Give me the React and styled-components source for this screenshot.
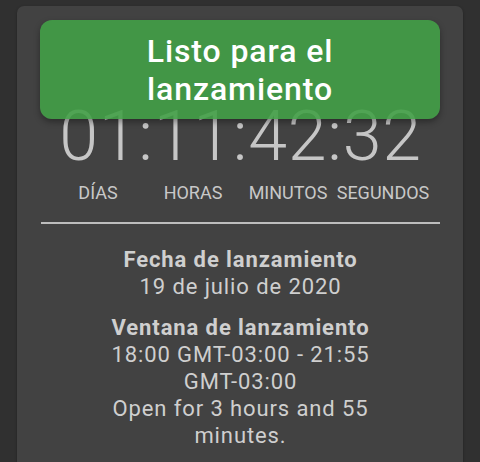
import React from "react";
import styled, { createGlobalStyle } from "styled-components";

const Global = createGlobalStyle`
  html, body { margin: 0; padding: 0; background: #303030; }
  body { font-family: Roboto, "Noto Sans", sans-serif; width: 480px; height: 462px; overflow: hidden; }
`;

const Page = styled.div`
  padding: 6px 17px 0 17px;
`;

const Card = styled.div`
  position: relative;
  background: #424242;
  border-radius: 7px;
  height: 470px;
  padding: 95px 23px 0 24px;
  box-sizing: border-box;
  box-shadow: 0 1px 3px rgba(0,0,0,0.3);
`;

const Toast = styled.div`
  position: absolute;
  top: 14px;
  left: 23px;
  right: 23px;
  height: 99px;
  border-radius: 12px;
  background: rgba(67, 160, 71, 0.9);
  box-shadow: 0 3px 6px rgba(0,0,0,0.35);
  color: #fff;
  font-size: 32px;
  font-weight: 500;
  letter-spacing: 0.9px;
  line-height: 38px;
  text-align: center;
  display: flex;
  align-items: center;
  justify-content: center;
  z-index: 2;
`;

const Clock = styled.div`
  font-size: 70px;
  font-weight: 300;
  line-height: 70px;
  color: #c6c6c6;
  text-align: center;
  letter-spacing: 0.7px;
`;

const Units = styled.div`
  display: grid;
  grid-template-columns: repeat(4, 95px);
  justify-content: center;
  margin-top: 12px;
`;

const Unit = styled.div`
  text-align: center;
  font-size: 18px;
  line-height: 20px;
  color: #c8c8c8;
`;

const Divider = styled.hr`
  border: none;
  height: 2px;
  background: #bdbdbd;
  margin: 19px 0 0 0;
`;

const Info = styled.div`
  width: 290px;
  margin: 22px auto 0;
  text-align: center;
  color: #cfcfcf;
  font-size: 22px;
  letter-spacing: 0.9px;
  line-height: 27px;
`;

const Block = styled.div`
  margin-bottom: ${p => p.$gap || 0}px;
`;

const Title = styled.div`
  font-weight: 700;
`;

export default function App() {
  return (
    <>
      <Global />
      <Page>
        <Card>
          <Toast>Listo para el<br />lanzamiento</Toast>
          <Clock>01:11:42:32</Clock>
          <Units>
            <Unit>DÍAS</Unit>
            <Unit>HORAS</Unit>
            <Unit>MINUTOS</Unit>
            <Unit>SEGUNDOS</Unit>
          </Units>
          <Divider />
          <Info>
            <Block $gap={14}>
              <Title>Fecha de lanzamiento</Title>
              <div>19 de julio de 2020</div>
            </Block>
            <Block>
              <Title>Ventana de lanzamiento</Title>
              <div>18:00 GMT-03:00 - 21:55 GMT-03:00</div>
              <div>Open for 3 hours and 55 minutes.</div>
            </Block>
          </Info>
        </Card>
      </Page>
    </>
  );
}
